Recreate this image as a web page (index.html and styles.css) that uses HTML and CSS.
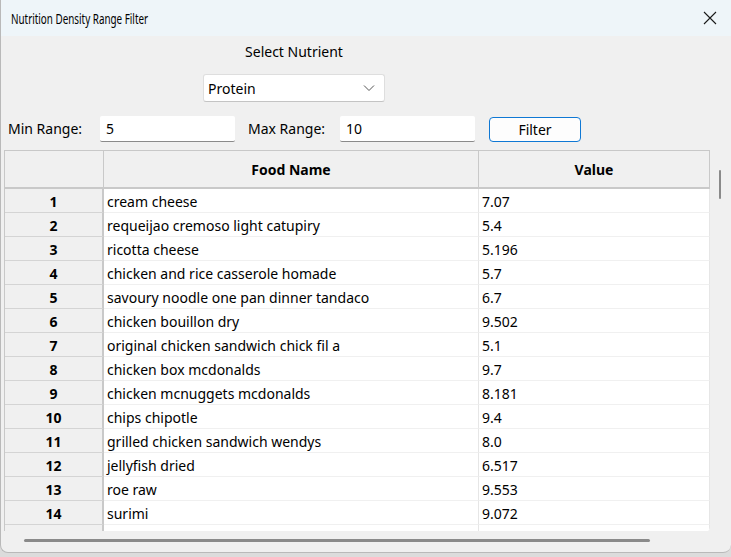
FILE: index.html
```html
<!DOCTYPE html>
<html>
<head>
<meta charset="utf-8">
<link rel="stylesheet" href="styles.css">
</head>
<body>
<div class="window">
  <div class="titlebar">
    <span class="title">Nutrition Density Range Filter</span>
    <svg class="close" width="14" height="14" viewBox="0 0 14 14"><path d="M1 1 L13 13 M13 1 L1 13" stroke="#1a1a1a" stroke-width="1.1" fill="none"/></svg>
  </div>
  <div class="content">
    <div class="nutrient">
      <div class="nutrient-label">Select Nutrient</div>
      <div class="combo">
        <span>Protein</span>
        <svg width="12" height="8" viewBox="0 0 12 8"><path d="M1 1.5 L6 6.5 L11 1.5" stroke="#555" stroke-width="1" fill="none"/></svg>
      </div>
    </div>
    <div class="range-row">
      <span class="lbl lbl-min">Min Range:</span>
      <div class="input">5</div>
      <span class="lbl lbl-max">Max Range:</span>
      <div class="input">10</div>
      <button class="btn">Filter</button>
    </div>
    <div class="table-area">
      <div class="table-view">
        <div class="grid">
          <div class="corner"></div>
          <div class="hcell">Food Name</div>
          <div class="hcell">Value</div>
          <div class="rh">1</div><div class="c">cream cheese</div><div class="c">7.07</div>
          <div class="rh">2</div><div class="c">requeijao cremoso light catupiry</div><div class="c">5.4</div>
          <div class="rh">3</div><div class="c">ricotta cheese</div><div class="c">5.196</div>
          <div class="rh">4</div><div class="c">chicken and rice casserole homade</div><div class="c">5.7</div>
          <div class="rh">5</div><div class="c">savoury noodle one pan dinner tandaco</div><div class="c">6.7</div>
          <div class="rh">6</div><div class="c">chicken bouillon dry</div><div class="c">9.502</div>
          <div class="rh">7</div><div class="c">original chicken sandwich chick fil a</div><div class="c">5.1</div>
          <div class="rh">8</div><div class="c">chicken box mcdonalds</div><div class="c">9.7</div>
          <div class="rh">9</div><div class="c">chicken mcnuggets mcdonalds</div><div class="c">8.181</div>
          <div class="rh">10</div><div class="c">chips chipotle</div><div class="c">9.4</div>
          <div class="rh">11</div><div class="c">grilled chicken sandwich wendys</div><div class="c">8.0</div>
          <div class="rh">12</div><div class="c">jellyfish dried</div><div class="c">6.517</div>
          <div class="rh">13</div><div class="c">roe raw</div><div class="c">9.553</div>
          <div class="rh">14</div><div class="c">surimi</div><div class="c">9.072</div>
          <div class="rh">15</div><div class="c">cured fish</div><div class="c">7.21</div>
        </div>
      </div>
      <div class="vscroll"><div class="vthumb"></div></div>
    </div>
    <div class="hscroll"><div class="hthumb"></div></div>
  </div>
</div>
</body>
</html>
```

FILE: styles.css
```css
* { box-sizing: border-box; }
html, body { margin: 0; padding: 0; }
body {
  width: 731px;
  height: 557px;
  background: #dcdcdc;
  font-family: "Noto Sans", "Open Sans", sans-serif;
  font-size: 14px;
  color: #000;
  overflow: hidden;
}
.window {
  width: 731px;
  height: 553px;
  background: #f0f0f0;
  border-left: 1px solid #b9b9b9;
  border-bottom: 1px solid #b9b9b9;
  border-radius: 0 0 8px 8px;
  overflow: hidden;
  display: flex;
  flex-direction: column;
}
.titlebar {
  height: 36px;
  flex: none;
  background: #eef5f9;
  display: flex;
  align-items: center;
  justify-content: space-between;
  padding: 0 14px 0 10px;
}
.title {
  font-size: 14.5px;
  color: #000;
  display: inline-block;
  transform: scaleX(0.68);
  transform-origin: left center;
  white-space: nowrap;
}
.close { display: block; }
.content {
  flex: 1;
  display: flex;
  flex-direction: column;
}
.nutrient {
  margin-left: 202px;
  width: 182px;
  display: flex;
  flex-direction: column;
  align-items: center;
  padding-top: 6px;
}
.nutrient-label { height: 18px; line-height: 18px; padding-top: 1px; }
.combo {
  margin-top: 14px;
  width: 182px;
  height: 28px;
  background: #fff;
  border: 1px solid #dedede;
  border-bottom-color: #c4c4c4;
  border-radius: 3px;
  display: flex;
  align-items: center;
  justify-content: space-between;
  padding: 0 9px 0 4px;
}
.range-row {
  display: flex;
  align-items: center;
  margin-top: 14px;
  height: 26px;
  padding-left: 7px;
}
.lbl { line-height: 26px; white-space: nowrap; }
.lbl-min { width: 92px; }
.lbl-max { margin-left: 13px; width: 92px; }
.input {
  width: 135px;
  height: 26px;
  background: #fff;
  border-bottom: 1px solid #8a8a8a;
  border-radius: 2px;
  padding-left: 6px;
  line-height: 25px;
}
.btn {
  margin-left: 14px;
  width: 92px;
  height: 25px;
  background: #fdfdfd;
  border: 1px solid #0f78d4;
  border-radius: 4px;
  font-family: inherit;
  font-size: 14px;
  color: #000;
  padding: 0;
}
.table-area {
  margin-top: 8px;
  display: flex;
  height: 381px;
}
.table-view {
  margin-left: 3px;
  width: 706px;
  height: 381px;
  overflow: hidden;
  border-left: 1px solid #c8c8c8;
  border-top: 1px solid #c8c8c8;
  border-radius: 0 0 4px 0;
  background: #fff;
}
.grid {
  display: grid;
  grid-template-columns: 99px 375px 231px;
  grid-auto-rows: 24px;
  grid-template-rows: 38px;
}
.corner, .hcell {
  background: #f0f0f0;
  border-right: 1px solid #c9c9c9;
  border-bottom: 2px solid #c9c9c9;
}
.hcell {
  font-weight: bold;
  display: flex;
  align-items: center;
  justify-content: center;
}
.rh {
  background: #f0f0f0;
  border-right: 2px solid #c9c9c9;
  border-bottom: 1px solid #d4d4d4;
  font-weight: bold;
  display: flex;
  align-items: center;
  justify-content: center;
  padding-top: 1px;
}
.c {
  background: #fff;
  border-bottom: 1px solid #f0f0f0;
  border-right: 1px solid #e6e6e6;
  padding-left: 3px;
  padding-top: 1px;
  display: flex;
  align-items: center;
  white-space: nowrap;
  overflow: hidden;
}
.vscroll {
  flex: 1;
  position: relative;
}
.vthumb {
  position: absolute;
  left: 9px;
  top: 20px;
  width: 2px;
  height: 29px;
  border-radius: 1px;
  background: #8a8a8a;
}
.hscroll {
  height: 20px;
  position: relative;
}
.hthumb {
  position: absolute;
  left: 23px;
  top: 8px;
  width: 626px;
  height: 3px;
  border-radius: 2px;
  background: #8a8a8a;
}
```
